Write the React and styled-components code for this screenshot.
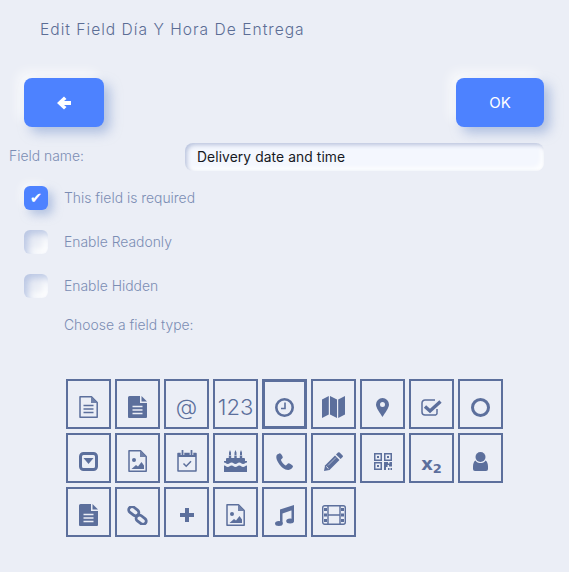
import React from "react";
import styled, { createGlobalStyle } from "styled-components";

const Global = createGlobalStyle`
  html, body { margin: 0; padding: 0; background: #ebeef6; }
  body { font-family: Inter, "Liberation Sans", sans-serif; }
`;

const INK = "#5c6f9c";
const BG = "#ebeef6";

const Page = styled.div`
  width: 569px;
  height: 572px;
  overflow: hidden;
  box-sizing: border-box;
  padding-top: 20px;
`;

const Title = styled.h1`
  margin: 0 0 0 40px;
  font-size: 15.6px;
  line-height: 19px;
  font-weight: 300;
  letter-spacing: 1px;
  color: #5b6d95;
`;

const Toolbar = styled.div`
  display: flex;
  justify-content: space-between;
  margin: 39px 25px 0 24px;
`;

const ActionButton = styled.button`
  width: ${(p) => p.$width}px;
  height: 49px;
  border: 0;
  padding: 0;
  border-radius: 8px;
  background: #4d82ff;
  color: #fff;
  font-family: inherit;
  font-size: 15px;
  font-weight: 400;
  display: flex;
  align-items: center;
  justify-content: center;
  box-shadow: 6px 6px 12px rgba(135, 160, 210, 0.6), -6px -6px 12px rgba(255, 255, 255, 0.75);
`;

const NameRow = styled.div`
  display: flex;
  align-items: center;
  margin: 16px 25px 0 9px;
  height: 28px;
`;

const Label = styled.label`
  font-size: 13.9px;
  font-weight: 300;
  color: #7b8db4;
`;

const NameLabel = styled(Label)`
  width: 176px;
  position: relative;
  top: -1px;
`;

const NameInput = styled.input`
  flex: 1;
  min-width: 0;
  height: 28px;
  box-sizing: border-box;
  border: 0;
  outline: 0;
  border-radius: 8px;
  padding: 0 12px 1px;
  font-family: inherit;
  font-size: 13.8px;
  font-weight: 400;
  letter-spacing: 0.1px;
  color: #16191f;
  background: #f4f7fe;
  box-shadow: inset 2px 2px 4px rgba(165, 178, 210, 0.75), inset -3px -3px 5px #fff;
`;

const Checks = styled.div`
  display: flex;
  flex-direction: column;
  gap: 20px;
  margin: 15px 0 0 24px;
`;

const CheckRow = styled.div`
  display: flex;
  align-items: center;
  gap: 16px;
  height: 24px;
`;

const Box = styled.span`
  width: 24px;
  height: 24px;
  border-radius: 6px;
  display: flex;
  align-items: center;
  justify-content: center;
  color: #fff;
  font-family: "DejaVu Sans", sans-serif;
  font-size: 15px;
  line-height: 1;
  background: ${(p) => (p.$on ? "#4d82ff" : "#ebeef6")};
  box-shadow: ${(p) =>
    p.$on
      ? "5px 5px 10px rgba(135,160,210,.55), -3px -3px 8px rgba(255,255,255,.7)"
      : "inset 4px 4px 7px rgba(170,185,222,.75), inset -4px -4px 7px #fff"};
`;

const Choose = styled(Label)`
  display: block;
  margin: 19px 0 0 64px;
  line-height: 16px;
`;

const Grid = styled.div`
  display: grid;
  grid-template-columns: repeat(9, 45px);
  grid-auto-rows: 50px;
  column-gap: 4px;
  row-gap: 4px;
  margin: 46px 0 0 66px;
`;

const Tile = styled.button`
  box-sizing: border-box;
  padding: 6px 0 0;
  background: transparent;
  border: ${(p) => (p.$active ? 3 : 2)}px solid ${INK};
  color: ${INK};
  display: flex;
  align-items: center;
  justify-content: center;
  font-family: inherit;
`;

const GlyphText = styled.span`
  font-size: ${(p) => p.$size}px;
  font-weight: 300;
  line-height: 1;
  color: ${INK};
`;

const SubGlyph = styled.span`
  font-family: "DejaVu Sans", sans-serif;
  font-weight: 700;
  font-size: 18px;
  line-height: 1;
  color: ${INK};
  position: relative;
  top: 3px;
  & sub {
    font-size: 13px;
    line-height: 0;
    vertical-align: -3px;
  }
`;

const Svg = ({ w, h, children }) => (
  <svg width={w} height={h} viewBox={`0 0 ${w} ${h}`} fill={INK} xmlns="http://www.w3.org/2000/svg">
    {children}
  </svg>
);

const DocOutline = ({ children }) => (
  <Svg w={19} h={22}>
    <path d="M1 .8h11.5L18.200 6.500V21.200H1z" fill="none" stroke={INK} strokeWidth="1.500" strokeLinejoin="round" />
    <path d="M12 1v6h6z" fill={INK} opacity=".85" />
    {children}
  </Svg>
);

const FileLines = () => (
  <DocOutline>
    <path d="M4.500 9.500h10M4.500 13h10M4.500 16.500h10" stroke={INK} strokeWidth="1.500" />
  </DocOutline>
);

const FileImage = () => (
  <DocOutline>
    <circle cx="6" cy="10" r="2" />
    <path d="M3.500 19l4.500-4 2 1.500 3.500-4.500 2.500 3.500V19z" />
  </DocOutline>
);

const FileSolid = () => (
  <Svg w={19} h={22}>
    <path d="M1.500 0H12v7h7v14a1 1 0 0 1-1 1H1a1 1 0 0 1-1-1V1.500A1.500 1.500 0 0 1 1.500 0z" />
    <path d="M13.500 0L19 5.500h-5.500z" />
    <path d="M4.500 10.500h10M4.500 14h10M4.500 17.500h10" stroke={BG} strokeWidth="1.500" />
  </Svg>
);

const Clock = () => (
  <Svg w={19} h={19}>
    <circle cx="9.500" cy="9.500" r="8.200" fill="none" stroke={INK} strokeWidth="2.600" />
    <path d="M10 4.500V10.500H6" fill="none" stroke={INK} strokeWidth="1.600" />
  </Svg>
);

const MapIcon = () => (
  <Svg w={23} h={22}>
    <path d="M0 3.500L6.800 0V18.500L0 22z" />
    <path d="M8 0L15 3.500V22L8 18.500z" />
    <path d="M16.200 3.500L23 0V18.500L16.200 22z" />
  </Svg>
);

const Pin = () => (
  <Svg w={13} h={19}>
    <path
      fillRule="evenodd"
      d="M6.500 0A6.500 6.500 0 0 1 13 6.500C13 10 9 15 6.500 19 4 15 0 10 0 6.500A6.500 6.500 0 0 1 6.500 0zm0 4a2.500 2.500 0 1 0 0 5 2.500 2.500 0 0 0 0-5z"
    />
  </Svg>
);

const CheckSquare = () => (
  <Svg w={21} h={17}>
    <path d="M15 16H4a3 3 0 0 1-3-3V4a3 3 0 0 1 3-3h10" fill="none" stroke={INK} strokeWidth="1.500" />
    <path d="M16 10v3a3 3 0 0 1-1 3" fill="none" stroke={INK} strokeWidth="1.500" />
    <path d="M4 7.500L9 12 19.500 2.500" fill="none" stroke={INK} strokeWidth="3.400" />
  </Svg>
);

const Ring = () => (
  <Svg w={19} h={19}>
    <circle cx="9.500" cy="9.500" r="8" fill="none" stroke={INK} strokeWidth="3" />
  </Svg>
);

const CaretSquare = () => (
  <Svg w={19} h={19}>
    <rect x="1.500" y="1.500" width="16" height="16" rx="3" fill="none" stroke={INK} strokeWidth="3" />
    <path d="M4.500 6h10l-5 6z" />
  </Svg>
);

const Calendar = () => (
  <Svg w={20} h={22}>
    <path d="M1 3.500h18V21H1z" fill="none" stroke={INK} strokeWidth="1.500" strokeLinejoin="round" />
    <path d="M1 3.500h18v3.500H1z" />
    <path d="M5.500 0.500v4.500M14.500 0.500v4.500" stroke={BG} strokeWidth="3.600" />
    <path d="M5.500 0.500v4M14.500 0.500v4" stroke={INK} strokeWidth="1.800" strokeLinecap="round" />
    <path d="M6.500 13.500l2.700 2.700 4.800-5" fill="none" stroke={INK} strokeWidth="1.500" />
  </Svg>
);

const Cake = () => (
  <Svg w={23} h={22}>
    <path d="M5 2.500l1-2.500 1 2.500V5H5zM10.500 2.500l1-2.500 1 2.500V5h-2zM16 2.500l1-2.500 1 2.500V5h-2z" />
    <path d="M4.800 8h2.400V5.500H4.800zM10.300 8h2.400V5.500h-2.400zM15.800 8h2.400V5.500h-2.400z" />
    <path d="M3 8h17a1 1 0 0 1 1 1v2H2V9a1 1 0 0 1 1-1z" />
    <path d="M0 12.500c2 0 2 1.500 3.800 1.500S5.700 12.500 7.600 12.500 9.600 14 11.500 14s1.900-1.500 3.800-1.500 1.900 1.500 3.800 1.500 2-1.500 3.900-1.500V11H0z" />
    <path d="M0 15.500c2 0 2 1.500 3.800 1.500s1.900-1.500 3.800-1.500 2 1.500 3.900 1.500 1.900-1.500 3.800-1.500 1.900 1.500 3.800 1.500 2-1.500 3.900-1.500V22H0z" />
  </Svg>
);

const Phone = () => (
  <Svg w={17} h={17}>
    <path d="M3.800 0.300L1.200 1.500C-.3 3 0 6 2.500 10c2.500 4 6 6.800 9.700 7 1.500 0 3.500-1 4.300-2.500.3-.6.500-1 .5-1.400-.6-1-3.500-2.700-4.500-2.800-.5 0-2 2.200-2.700 2.200C8.500 12.500 4.800 8 5 6.700c.1-.6 1.800-1.500 1.800-2.300C6.700 3.300 5 .4 3.800.3z" />
  </Svg>
);

const Pencil = () => (
  <Svg w={19} h={19}>
    <path d="M14 0.500a1.200 1.200 0 0 1 1.600 0l3 3a1.200 1.200 0 0 1 0 1.600l-2 2L12 2.500z" />
    <path d="M11 3.500l4.500 4.500L5.500 18 0 19l1-5.500z" />
    <path d="M2.300 14.500l2.200 2.200" stroke={BG} strokeWidth="1" />
    <path d="M4 13.500L12 5.500" stroke={BG} strokeWidth=".8" opacity=".7" />
  </Svg>
);

const Qr = () => (
  <Svg w={18} h={17}>
    <path
      fillRule="evenodd"
      d="M0 0h8v8H0zm1.500 1.500v5h5v-5zM10 0h8v8h-8zm1.500 1.500v5h5v-5zM0 9h8v8H0zm1.500 1.500v5h5v-5z"
    />
    <path d="M3 3h2v2H3zM13 3h2v2h-2zM3 12h2v2H3z" />
    <path d="M10 9h4v1.500h1.500V9H18v4.500h-3V12h-1.500v2H12v3h-2zM14 15h1.500v2H14zM16.500 15H18v2h-1.500z" />
  </Svg>
);

const UserIcon = () => (
  <Svg w={15} h={19}>
    <circle cx="7.500" cy="5" r="5" />
    <path d="M2.500 8.500c1 2 3 2.500 5 2.500s4-.5 5-2.500c1.500.7 2.500 3 2.500 6V17a2 2 0 0 1-2 2H2a2 2 0 0 1-2-2v-2.500c0-3 1-5.300 2.500-6z" />
  </Svg>
);

const LinkIcon = () => (
  <Svg w={21} h={19}>
    <g fill="none" stroke={INK} strokeWidth="2.800">
      <rect x="1.300" y="2" width="11" height="6.500" rx="3.200" transform="rotate(38 6.800 5.200)" />
      <rect x="8.700" y="10.500" width="11" height="6.500" rx="3.200" transform="rotate(38 14.200 13.700)" />
    </g>
  </Svg>
);

const Plus = () => (
  <Svg w={14} h={14}>
    <path d="M5 0h4v5h5v4H9v5H5V9H0V5h5z" />
  </Svg>
);

const Music = () => (
  <Svg w={19} h={21}>
    <path d="M5 4.500L19 0v4.500L7.500 8.500V18.500H5zM16.500 3H19v13.500h-2.500z" />
    <ellipse cx="3.900" cy="18.500" rx="3.900" ry="2.500" />
    <ellipse cx="15.100" cy="16" rx="3.900" ry="2.500" />
  </Svg>
);

const Film = () => (
  <Svg w={24} h={20}>
    <rect x=".7" y=".7" width="22.600" height="18.600" rx="2" fill="none" stroke={INK} strokeWidth="1.400" />
    <path d="M6 1v18M18 1v18M6 10h12" stroke={INK} strokeWidth="1.400" />
    <path d="M2 3h3v3H2zM2 8.500h3v3H2zM2 14h3v3H2zM19 3h3v3h-3zM19 8.500h3v3h-3zM19 14h3v3h-3z" />
  </Svg>
);

const ArrowBack = () => (
  <Svg w={14} h={14}>
    <path d="M7 0.500L9.500 3 7 5h7v4H7l2.500 2L7 13.500 0 7z" fill="#fff" />
  </Svg>
);

const icons = [
  <FileLines />,
  <FileSolid />,
  <GlyphText $size={22}>@</GlyphText>,
  <GlyphText $size={22}>123</GlyphText>,
  <Clock />,
  <MapIcon />,
  <Pin />,
  <CheckSquare />,
  <Ring />,
  <CaretSquare />,
  <FileImage />,
  <Calendar />,
  <Cake />,
  <Phone />,
  <Pencil />,
  <Qr />,
  <SubGlyph>x<sub>2</sub></SubGlyph>,
  <UserIcon />,
  <FileSolid />,
  <LinkIcon />,
  <Plus />,
  <FileImage />,
  <Music />,
  <Film />,
];

export default function App() {
  return (
    <Page>
      <Global />
      <Title>Edit Field Día Y Hora De Entrega</Title>
      <Toolbar>
        <ActionButton $width={80} aria-label="Back"><ArrowBack /></ActionButton>
        <ActionButton $width={88}>OK</ActionButton>
      </Toolbar>
      <NameRow>
        <NameLabel>Field name:</NameLabel>
        <NameInput readOnly value="Delivery date and time" />
      </NameRow>
      <Checks>
        <CheckRow><Box $on>✔</Box><Label>This field is required</Label></CheckRow>
        <CheckRow><Box /><Label>Enable Readonly</Label></CheckRow>
        <CheckRow><Box /><Label>Enable Hidden</Label></CheckRow>
      </Checks>
      <Choose>Choose a field type:</Choose>
      <Grid>
        {icons.map((icon, i) => (
          <Tile key={i} $active={i === 4}>{icon}</Tile>
        ))}
      </Grid>
    </Page>
  );
}
